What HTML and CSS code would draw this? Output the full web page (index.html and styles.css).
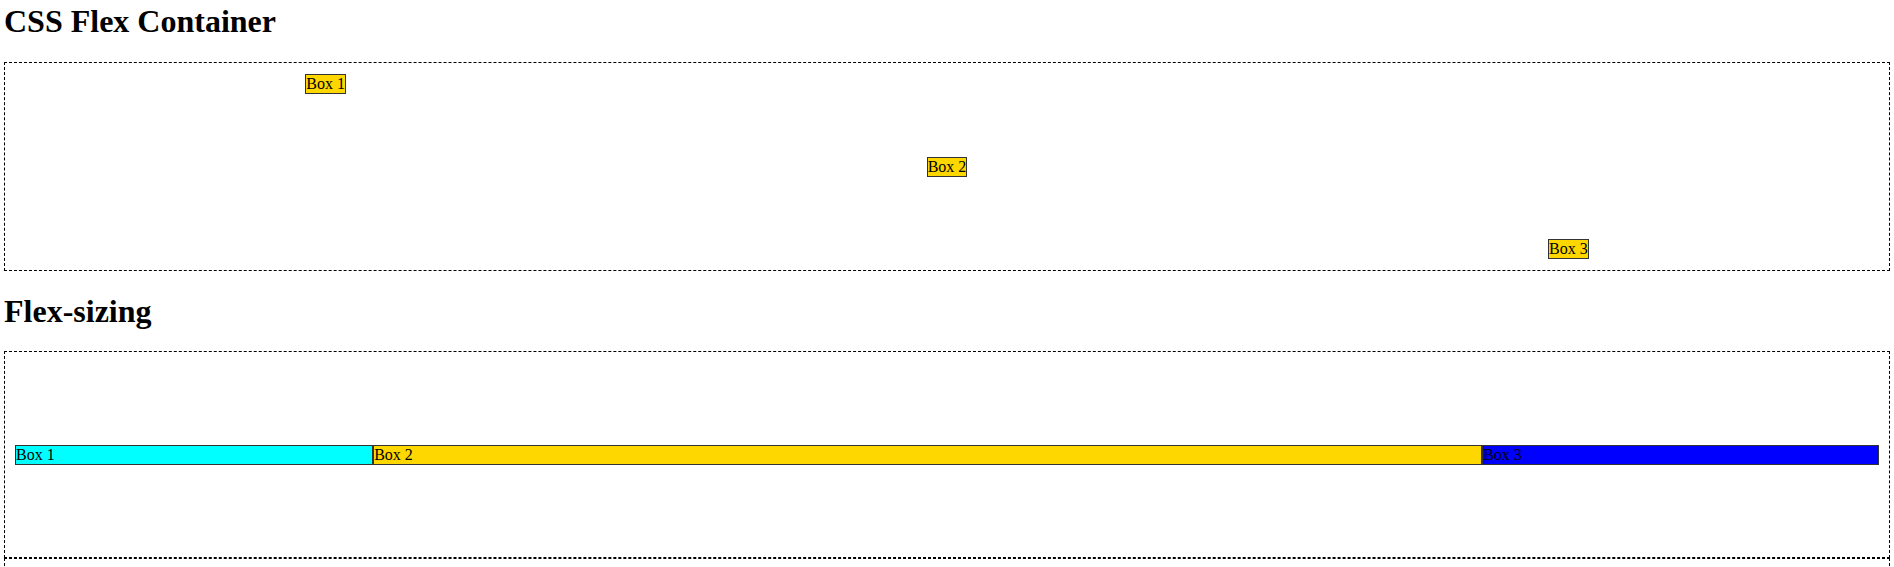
FILE: index.html
```html
<!DOCTYPE html>
<html>
<head>
<meta charset="utf-8">
<title>CSS Flex Container</title>
<link rel="stylesheet" href="styles.css">
</head>
<body>
<h1 class="title first">CSS Flex Container</h1>
<div class="container align-demo">
  <div class="box gold start">Box 1</div>
  <div class="box gold center">Box 2</div>
  <div class="box gold end">Box 3</div>
</div>
<h2 class="title">Flex-sizing</h2>
<div class="container sizing-demo">
  <div class="box cyan grow-zero">Box 1</div>
  <div class="box gold grow-three">Box 2</div>
  <div class="box blue grow-one">Box 3</div>
</div>
<div class="container next"></div>
</body>
</html>
```
FILE: styles.css
```css
html, body {
  background: #fff;
}
body {
  margin: 0 4px;
  font-family: "Liberation Serif", "Times New Roman", serif;
  font-size: 16px;
  color: #000;
}
.title {
  font-size: 32px;
  font-weight: bold;
  line-height: 37px;
  margin: 21.5px 0;
}
.title.first {
  margin-top: 3px;
  margin-bottom: 22px;
}
.container {
  display: flex;
  border: 1px dashed #000;
  box-sizing: border-box;
}
.align-demo {
  height: 209px;
  padding: 11px 10px;
  justify-content: space-around;
}
.sizing-demo {
  height: 207px;
  padding: 0 10px;
  align-items: center;
}
.next {
  height: 200px;
}
.box {
  border: 1px solid #333;
  line-height: 18px;
  white-space: nowrap;
}
.gold { background: #ffd700; }
.cyan { background: #00ffff; }
.blue { background: #0000ff; }
.start { align-self: flex-start; }
.center { align-self: center; }
.end { align-self: flex-end; }
.grow-zero { flex: 1 1 0; }
.grow-three { flex: 3 1 auto; }
.grow-one { flex: 1 1 auto; }
```
